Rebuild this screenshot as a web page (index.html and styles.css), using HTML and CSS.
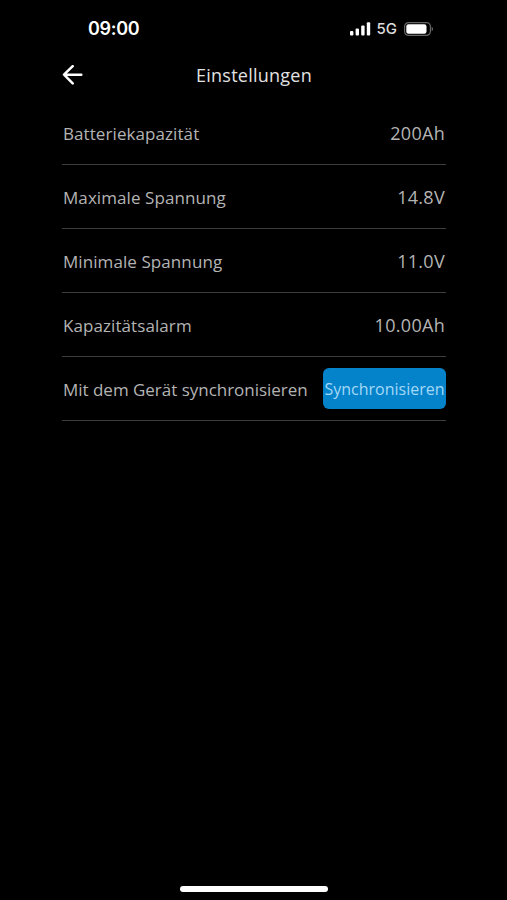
FILE: index.html
```html
<!DOCTYPE html>
<html lang="de">
<head>
  <meta charset="UTF-8">
  <meta name="viewport" content="width=device-width, initial-scale=1.0">
  <title>Einstellungen</title>
  <link rel="stylesheet" href="styles.css">
</head>
<body>
  <div class="screen">
    <!-- Status bar -->
    <div class="status-bar">
      <span class="time">09:00</span>
      <div class="status-icons">
        <svg class="signal" width="22" height="14" viewBox="0 0 22 14">
          <rect x="1" y="9" width="3.4" height="4.5" rx="1"/>
          <rect x="6.6" y="6.5" width="3.4" height="7" rx="1"/>
          <rect x="12.2" y="3.5" width="3.4" height="10" rx="1"/>
          <rect x="17.8" y="0.3" width="3.4" height="13.2" rx="1"/>
        </svg>
        <span class="network">5G</span>
        <svg class="battery" width="30" height="14" viewBox="0 0 30 14">
          <rect x="0.6" y="0.6" width="25.8" height="12.8" rx="4" fill="none" stroke="#666" stroke-width="1.2"/>
          <rect x="2.3" y="2.2" width="20.2" height="9.6" rx="2.2" fill="#fff"/>
          <path d="M27.7 4.8v4.4c1.7-.7 1.7-3.7 0-4.4z" fill="#777"/>
        </svg>
      </div>
    </div>

    <header class="header">
      <a class="back" aria-label="Zurück">
        <svg width="21" height="20" viewBox="0 0 21 20">
          <path d="M10.7 1.2L2 9.7l8.7 8.7M2.3 9.7h17" fill="none" stroke="#fff" stroke-width="2.5" stroke-linecap="round" stroke-linejoin="round"/>
        </svg>
      </a>
      <h1>Einstellungen</h1>
    </header>

    <!-- Settings -->
    <ul class="settings">
      <li><span class="label">Batteriekapazität</span><span class="value">200Ah</span></li>
      <li><span class="label">Maximale Spannung</span><span class="value">14.8V</span></li>
      <li><span class="label">Minimale Spannung</span><span class="value">11.0V</span></li>
      <li><span class="label">Kapazitätsalarm</span><span class="value">10.00Ah</span></li>
      <li><span class="label sync-label">Mit dem Gerät synchronisieren</span><button class="sync-button">Synchronisieren</button></li>
    </ul>

    <div class="home-indicator"></div>
  </div>
</body>
</html>
```

FILE: styles.css
```css
* {
  box-sizing: border-box;
}

body {
  margin: 0;
  background-color: #000;
  color: #b4b4b4;
  font-family: "Open Sans", "Noto Sans", sans-serif;
  font-weight: 400;
}

.screen {
  display: flex;
  flex-direction: column;
  height: 900px;
  padding: 0 61px 8px 62px;
}

.status-bar {
  display: flex;
  justify-content: space-between;
  align-items: center;
  height: 56px;
  padding: 1px 12px 0 26px;
  color: #fff;
  font-family: Inter, sans-serif;
}

.time {
  font-size: 18px;
  font-weight: 600;
  letter-spacing: -0.3px;
}

.status-icons {
  display: flex;
  align-items: center;
}

.signal {
  fill: #fff;
}

.network {
  margin: 0 7px 0 6px;
  font-size: 15px;
  font-weight: 500;
  color: #ddd;
}

.header {
  display: grid;
  grid-template-columns: 21px 1fr 21px;
  align-items: center;
  height: 37px;
}

.back {
  display: flex;
}

h1 {
  margin: 0;
  text-align: center;
  font-size: 18px;
  font-weight: 400;
  line-height: 24px;
  letter-spacing: 0.25px;
  color: #e2e2e2;
}

.settings {
  flex: 1;
  margin: 0;
  padding: 8px 0 0;
  list-style: none;
}

.settings li {
  display: flex;
  justify-content: space-between;
  align-items: center;
  height: 64px;
  padding-left: 1px;
  border-bottom: 1px solid #3c3c3c;
  font-size: 17px;
  white-space: nowrap;
}

.label {
  padding-top: 1px;
  letter-spacing: 0.08px;
}

.sync-label {
  letter-spacing: -0.02px;
}

.value {
  padding-right: 1px;
  font-size: 18px;
  letter-spacing: 0.3px;
}

.sync-button {
  width: 123px;
  height: 41px;
  padding: 0;
  border: none;
  border-radius: 6px;
  background-color: #0482ca;
  color: #a3d9f7;
  font: inherit;
  font-size: 16px;
}

.home-indicator {
  align-self: center;
  width: 148px;
  height: 6px;
  border-radius: 3px;
  background-color: #fff;
}
```
